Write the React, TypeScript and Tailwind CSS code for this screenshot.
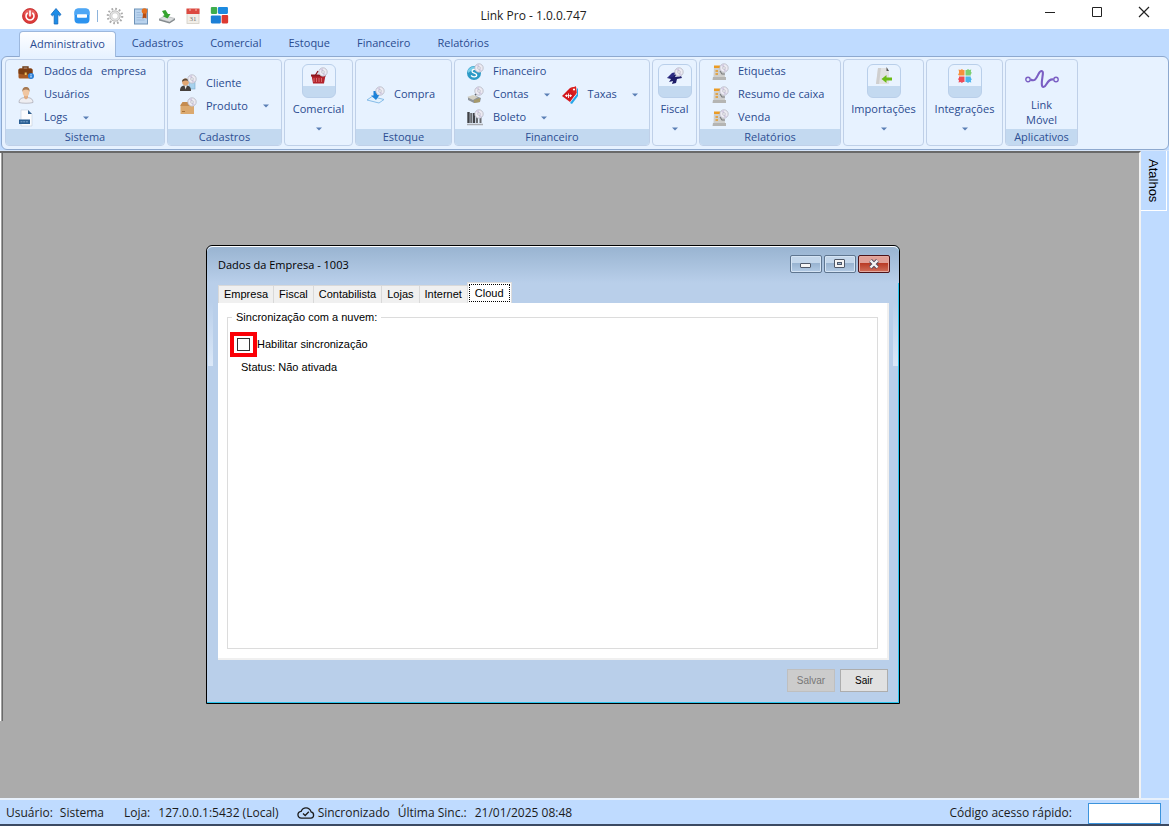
import { useState, type ReactNode } from "react";

// ─── Small drawings ──────────────────────────────────────────────────────────

function Svg({ size = 18, children }: { size?: number; children: ReactNode }) {
  return (
    <svg width={size} height={size} viewBox="0 0 18 18" fill="none" aria-hidden="true" className="shrink-0">
      {children}
    </svg>
  );
}

// Magnifier / disc that sits on the corner of many ribbon icons
function Disc() {
  return (
    <g>
      <circle cx="13" cy="5" r="4.2" fill="#eceaf2" stroke="#b5b7c2" strokeWidth=".8" />
      <path d="M13 5 10 2.4A4 4 0 0 1 13 1ZM13 5l3 2.6A4 4 0 0 1 13 9Z" fill="#d3cde2" />
      <circle cx="13" cy="5" r="1.3" fill="#fff" stroke="#a3a5b3" strokeWidth=".6" />
    </g>
  );
}

const PowerIcon = () => (
  <Svg>
    <circle cx="9" cy="9" r="7.5" fill="#dd3b3b" stroke="#c22929" strokeWidth=".8" />
    <path d="M3 7a6.3 6.3 0 0 1 12 0c-3 2-9 2-12 0Z" fill="#ee7a76" opacity=".6" />
    <path d="M6.2 6.2a4 4 0 1 0 5.6 0M9 4v5" stroke="#fff" strokeWidth="1.6" strokeLinecap="round" />
  </Svg>
);
const UpIcon = () => (
  <Svg>
    <path d="m9 1.500 5 6-1.400 1.300-1.800-1.500V17H7.200V7.300L5.400 8.800 4 7.500Z" fill="#1d8de8" stroke="#1167bb" strokeWidth=".8" />
  </Svg>
);
const MinusIcon = () => (
  <Svg>
    <rect x="1.500" y="1.500" width="15" height="15" rx="4" fill="#2c93ef" />
    <path d="M1.500 8V5.500a4 4 0 0 1 4-4h7a4 4 0 0 1 4 4V8Z" fill="#4ea7f5" />
    <rect x="4" y="7.300" width="10" height="3.400" rx=".8" fill="#fff" />
  </Svg>
);
const GearIcon = () => (
  <Svg>
    <circle cx="9" cy="9" r="7.200" stroke="#aaa" strokeWidth="2.200" strokeDasharray="1.700 2.070" />
    <circle cx="9" cy="9" r="5.200" fill="#e4e4e4" stroke="#bcbcbc" />
    <circle cx="9" cy="9" r="3.200" fill="#fff" stroke="#c4c4c4" strokeWidth=".7" />
  </Svg>
);
const CertificateIcon = () => (
  <Svg>
    <rect x="2.500" y="2" width="13" height="15" fill="#b9d3ee" stroke="#6f93b8" />
    <path d="M4.500 5.500h4M4.500 8h6M4.500 10.500h8M4.500 13h8" stroke="#9dbbdc" />
    <path d="m11 5.500-.5 6 2-.8 2 .8v-6Z" fill="#b84d12" />
    <circle cx="12.500" cy="4" r="2.800" fill="#e5701d" />
  </Svg>
);
const DownloadIcon = () => (
  <Svg>
    <path d="m1 12 6-3 10 2.500-5.500 3.500Z" fill="#dcdedf" stroke="#a2a6a9" strokeWidth=".6" />
    <path d="m1 12 10.500 3v1.600L1 13.500Zm10.500 3L17 11.500v1.400l-5.500 3.700Z" fill="#858b8e" />
    <path d="M4 4 7.500 3 10 7h2.500L9.500 11.500 4.500 9l2-.7Z" fill="#35a32e" />
  </Svg>
);
const CalendarIcon = () => (
  <Svg>
    <rect x="3" y="2.500" width="12" height="14" fill="#f1eee8" stroke="#d3cec5" strokeWidth=".8" />
    <rect x="2.500" y="1.500" width="13" height="5.500" fill="#dc4a41" />
    <path d="M5 3h2M11 3h2" stroke="#f3b5b0" />
    <text x="9" y="14" textAnchor="middle" fontSize="7" fontFamily="Liberation Serif, serif" fill="#77716b">31</text>
  </Svg>
);
const TilesIcon = () => (
  <Svg size={19}>
    <rect x=".8" y="1" width="6" height="6.500" rx="1" fill="#3fae4d" />
    <rect x="7.500" y="1" width="9.500" height="6.500" rx="1" fill="#1c8ae0" />
    <rect x=".8" y="9" width="9.500" height="7.500" rx="1" fill="#1c7fd6" />
    <rect x="11" y="8.500" width="6.200" height="8" rx="1" fill="#dd3a31" />
  </Svg>
);

const BriefcaseIcon = () => (
  <Svg>
    <path d="M6 6V4h5v2" stroke="#6b3a16" strokeWidth="1.400" />
    <rect x="1.500" y="5.500" width="14" height="10" rx="1.500" fill="#a85a24" />
    <path d="M1.500 7q0-1.500 1.500-1.500h11q1.500 0 1.500 1.500v3.500c-4 1.500-10 1.500-14 0Z" fill="#7b3d14" />
    <rect x="7.700" y="9.500" width="2" height="2.500" fill="#f0c05c" />
    <circle cx="14" cy="13" r="3" fill="#2a7fd8" />
    <path d="M14 12.500v2M14 11v.8" stroke="#fff" />
  </Svg>
);
const UserIcon = () => (
  <Svg>
    <path d="M2 16.500c0-4 3-5 7-5s7 1 7 5c-3 1-11 1-14 0Z" fill="#eeeef2" stroke="#a8a8b2" strokeWidth=".7" />
    <path d="M7 9h4v3l-2 1.500L7 12Z" fill="#dfac83" />
    <ellipse cx="9" cy="6" rx="3.300" ry="4.200" fill="#f0c6a1" />
    <path d="M5.500 6C5 2.500 6.500 1 9 1s4 1.500 3.500 5c-.5-2-1.500-2.600-3.500-2.600S6 4 5.500 6Z" fill="#a57953" />
  </Svg>
);
const LogFileIcon = () => (
  <Svg>
    <path d="M4 1h7l4 4v12H4Z" fill="#fbfcfe" stroke="#c4cddb" strokeWidth=".6" />
    <path d="m11 1 4 4h-4Z" fill="#2f5f8f" />
    <path d="M2 10.500h11V15H2Z" fill="#2b5f93" />
    <path d="M3.500 12.800h8" stroke="#7ea6cd" strokeWidth="1" strokeDasharray="2 .7" />
  </Svg>
);
const ClientIcon = () => (
  <Svg>
    <rect x="10" y="7" width="6" height="8" fill="#a7d2ee" stroke="#79a9c9" strokeWidth=".6" />
    <path d="M1 17c0-4 1.500-5.500 5.500-5.500s5.500 1.500 5.500 5.500Z" fill="#45403c" />
    <path d="m5.500 11.500 1 4 1.500-4Z" fill="#eee" />
    <circle cx="6.500" cy="8" r="3.400" fill="#e2a772" />
    <path d="M3 8c-.3-4.500 6.700-5 7 0-1.500-2-5-2-7 0Z" fill="#5c4a3a" />
    <Disc />
  </Svg>
);
const BoxIcon = () => (
  <Svg>
    <path d="M1.500 8H15v9H1.500Z" fill="#dba96f" />
    <path d="m1.500 8 2-3H9l1 2h5v2H1.500Z" fill="#c58c50" />
    <path d="M3 14.500h3" stroke="#a87339" />
    <Disc />
  </Svg>
);
const BasketIcon = () => (
  <Svg>
    <path d="m5 9 3-5M13 9 9 4" stroke="#8f1d24" strokeWidth="1.300" />
    <path d="M1.500 8h14l-1.500 8.500H3Z" fill="#b3222b" />
    <path d="M4 11v4M6.500 11v4M9 11v4M11.500 11v4" stroke="#de7d7d" strokeWidth=".8" />
    <path d="M1 7.500h14.500v2H1Z" fill="#8b161e" />
    <Disc />
  </Svg>
);
const PurchaseIcon = () => (
  <Svg>
    <path d="m0 14 5-3.500 12 3-5 3.500Z" fill="#e2f1fd" stroke="#7db7e5" strokeWidth=".9" />
    <path d="M6.500 5H10v4h2.500L9 14 4 9.500h2.500Z" fill="#1d83d9" />
    <Disc />
  </Svg>
);
const MoneyIcon = () => (
  <Svg>
    <circle cx="8" cy="10" r="7" fill="#2c9ac6" />
    <path d="M2 7c3-4 8-5 11 0-4-1-8 0-11 3Z" fill="#76cde8" />
    <path d="M11 7.500c-2-2-5-1-5 .7 0 2.300 5 1.500 4.800 4C10.500 14.500 7 14.500 5 12.500" stroke="#fff" strokeWidth="1.300" />
    <Disc />
  </Svg>
);
const AccountsIcon = () => (
  <Svg>
    <path d="m2 11 8-1 5 2-1 4-6 1-6-3Z" fill="#90969c" />
    <path d="m1 11 6-2 5 2-5 3Z" fill="#d4d1c4" />
    <path d="m8 14 6-2v4l-6 1Z" fill="#a69a6c" />
    <path d="m9 9 3-2" stroke="#646870" strokeWidth="2" />
    <Disc />
  </Svg>
);
const BarcodeIcon = () => (
  <Svg>
    <path d="M2.500 3v11M8 4v10" stroke="#404247" strokeWidth="2.400" />
    <path d="M5.200 4v10M11 8v6M14.500 8v6" stroke="#6a6c71" strokeWidth="2" />
    <path d="M1 15.500h16" stroke="#aaacb1" strokeWidth="1.300" />
    <Disc />
  </Svg>
);
const TagIcon = () => (
  <Svg>
    <path d="m9 17 7-9V2l1 1v7l-6 8Z" fill="#27a6e9" />
    <path d="M1 10 9 2l6-1.500L15.500 7 9 16Z" fill="#d3161d" />
    <path d="m9 2 6-1.500L15.500 7l-2 3Z" fill="#d9211f" />
    <circle cx="13" cy="3.500" r="1.100" fill="#fff" />
    <path d="M4 9.700h7M5.500 8.500v2.500M7.500 7.500v4.500M9.500 8.500v2.500" stroke="#fff" strokeWidth=".9" />
  </Svg>
);
const FiscalIcon = () => (
  <Svg>
    <path d="m1 11 7-3 3-2-2 4 6-1 1 2-5 1-1 4-4 1 1-3-4 1 2-3Z" fill="#1d1c69" />
    <path d="m1 11 5-5 4-1-3 5Z" fill="#2b2a82" />
    <Disc />
  </Svg>
);
const ReportIcon = () => (
  <Svg>
    <path d="M3 3h10l1 11H2.500Z" fill="#cfcfcd" />
    <path d="M2 14h13v3H1.500Z" fill="#b5b5b3" />
    <path d="M3 2.500h6V5H3Z" fill="#eb9b24" />
    <path d="M4.500 8H7M4.500 11H7" stroke="#e69820" strokeWidth="1.500" />
    <path d="m9 8 2 3h3" stroke="#77797c" strokeWidth="1.100" />
    <Disc />
  </Svg>
);
const ImportIcon = () => (
  <Svg>
    <path d="M3 1h9l2 3.500V17H1Z" fill="#e2e2e2" />
    <path d="M3 1h3L4 17H1Z" fill="#cfcfcf" />
    <path d="m11.500 0 2.500 4h-2.500Z" fill="#555" />
    <path d="m6.500 12 5-4v2.500h5.500v3h-5.500V16Z" fill="#6cbb16" />
  </Svg>
);
const PuzzleIcon = () => (
  <Svg>
    <path d="m3 4.500-.5-2 2 .5L6 2l1 1h1.500v5.500H3L2 7.300l1-1Z" fill="#f7903b" />
    <path d="M9.500 3h1.300L12 2l1.300 1 2-.5-.5 2 1 1.500-1 1v1.500H9.500Z" fill="#7bcf72" />
    <path d="M3 9.500h5.500V15H7l-1 1-1.500-1-2 .5.500-2L2 12l1-1Z" fill="#ef4a57" />
    <path d="M9.500 9.500h5.300V11l1 1.200-1 1.300.5 2-2-.5-1.300 1-1.200-1H9.500Z" fill="#4bb4ec" />
  </Svg>
);
const WaveIcon = () => (
  <svg width="34" height="20" viewBox="0 0 34 20" fill="none" stroke="#7b5fc4" aria-hidden="true">
    <circle cx="3" cy="10.500" r="2.200" strokeWidth="1.400" />
    <circle cx="31" cy="10.500" r="2.200" strokeWidth="1.400" />
    <path d="M5.500 10.500C10 13 11.500 9 13.500 5c2-4 5-4 4.300.500C17.200 10 15.500 18 18.500 18c3.500 0 3.500-9 10-7.500" strokeWidth="2.100" />
  </svg>
);
const CloudCheckIcon = () => (
  <svg width="18" height="12" viewBox="0 0 18 12" fill="none" stroke="#1c1c1c" strokeWidth="1.300" aria-hidden="true">
    <path d="M4.500 11.200h9.300a3.200 3.200 0 0 0 .3-6.300C13.300 2.300 11.500.8 9 .8 6.600.8 5 2 4.200 4.300c-4.300.6-4.500 6.300.3 6.900Z" />
    <path d="m6 6.500 2.200 2 3.600-3.800" />
  </svg>
);

// ─── Ribbon pieces ───────────────────────────────────────────────────────────

function Arrow() {
  return (
    <svg width="6" height="4" viewBox="0 0 6 4" aria-hidden="true" className="shrink-0">
      <path d="M0 .5h6L3 3.500Z" fill="#5a7fb5" />
    </svg>
  );
}

function RibbonGroup({ label, className, children }: { label?: string; className: string; children: ReactNode }) {
  return (
    <section className={`flex flex-col overflow-hidden rounded border border-[#bfd0e8] bg-[#e7f2ff] ${className}`}>
      <div className="flex flex-1 flex-col justify-center">{children}</div>
      {label && <h2 className="h-4 bg-[#c3d9f0] text-center leading-4 text-[#2d4f93]">{label}</h2>}
    </section>
  );
}

function RibbonItem({ icon, label, arrow }: { icon: ReactNode; label: string; arrow?: boolean }) {
  return (
    <button type="button" className="flex h-[23px] items-center whitespace-pre text-left">
      {icon}
      <span className="ml-[9px]">{label}</span>
      {arrow && <span className="ml-[15px]"><Arrow /></span>}
    </button>
  );
}

function RibbonBig({ icon, label }: { icon: ReactNode; label: string }) {
  return (
    <button type="button" className="flex h-full flex-col items-center pt-1">
      <span className="flex h-[34px] w-[34px] justify-center rounded-md border border-[#b9cfea] bg-[linear-gradient(#e9f3ff_67%,#c3d9f0_67%)] pt-[2px]">
        {icon}
      </span>
      <span className="mt-[3px] h-4 leading-4">{label}</span>
      <span className="mt-[10px]"><Arrow /></span>
    </button>
  );
}

const RIBBON_TABS = ["Administrativo", "Cadastros", "Comercial", "Estoque", "Financeiro", "Relatórios"];
const DIALOG_TABS = ["Empresa", "Fiscal", "Contabilista", "Lojas", "Internet", "Cloud"];

const QUICK_TOOLS = [
  { name: "Encerrar", icon: <PowerIcon /> },
  { name: "Subir", icon: <UpIcon /> },
  { name: "Recolher", icon: <MinusIcon /> },
  { name: "Configurar", icon: <GearIcon /> },
  { name: "Certificado", icon: <CertificateIcon /> },
  { name: "Baixar", icon: <DownloadIcon /> },
  { name: "Agenda", icon: <CalendarIcon /> },
  { name: "Painel", icon: <TilesIcon /> },
];

function TitleBar() {
  return (
    <header className="flex h-[29px] items-center bg-white pt-[2px] pr-[2px]">
      <div className="flex w-[41%] items-center gap-2 pl-[21px]">
        {QUICK_TOOLS.map((tool, i) => (
          <div key={tool.name} className="flex items-center gap-2">
            {i === 3 && <span className="-ml-[2px] h-3 w-px bg-[#8db4dc]" />}
            <button type="button" aria-label={tool.name}>{tool.icon}</button>
          </div>
        ))}
      </div>
      <h1 className="flex-1 pl-[2px] text-xs text-[#222]">Link Pro - 1.0.0.747</h1>
      <div className="-mt-2 flex text-[#222]">
        <button type="button" aria-label="Minimizar" className="flex w-[47px] justify-center">
          <svg width="12" height="12" viewBox="0 0 12 12"><path d="M1 6.500h10" stroke="currentColor" /></svg>
        </button>
        <button type="button" aria-label="Maximizar" className="flex w-[47px] justify-center">
          <svg width="12" height="12" viewBox="0 0 12 12" fill="none"><path d="M1.500 1.500h9v9h-9Z" stroke="currentColor" /></svg>
        </button>
        <button type="button" aria-label="Fechar" className="flex w-[47px] justify-center">
          <svg width="12" height="12" viewBox="0 0 12 12"><path d="m1 1 10 10M11 1 1 11" stroke="currentColor" strokeWidth="1.200" /></svg>
        </button>
      </div>
    </header>
  );
}

function Ribbon() {
  const [active, setActive] = useState("Administrativo");

  return (
    <div className="bg-[#bfdbff] text-[11px] text-[#2a4b8f]">
      <nav className="flex h-[27px] items-end gap-[5px] pl-[19px]">
        {RIBBON_TABS.map((tab) => (
          <button
            key={tab}
            type="button"
            onClick={() => setActive(tab)}
            className={`h-[26px] rounded-t ${active === tab ? "relative top-px border border-b-0 border-[#9db8dd] bg-linear-to-b from-white to-[#e7f2ff] px-[10px]" : "px-[11px]"}`}
          >
            {tab}
          </button>
        ))}
      </nav>
      <div className="ml-px flex h-[94px] gap-[2px] rounded-md border border-[#8ea9cf] bg-[#e7f2ff] p-[2px] pb-[3px] pl-[3px]">
        <RibbonGroup label="Sistema" className="w-[160px]">
          <div className="flex flex-col pl-[11px]">
            <RibbonItem icon={<BriefcaseIcon />} label="Dados da   empresa" />
            <RibbonItem icon={<UserIcon />} label="Usuários" />
            <RibbonItem icon={<LogFileIcon />} label="Logs" arrow />
          </div>
        </RibbonGroup>
        <RibbonGroup label="Cadastros" className="w-[115px]">
          <div className="flex flex-col pl-[11px]">
            <RibbonItem icon={<ClientIcon />} label="Cliente" />
            <RibbonItem icon={<BoxIcon />} label="Produto" arrow />
          </div>
        </RibbonGroup>
        <RibbonGroup className="w-[69px]">
          <RibbonBig icon={<BasketIcon />} label="Comercial" />
        </RibbonGroup>
        <RibbonGroup label="Estoque" className="w-[97px]">
          <div className="flex flex-col pl-[11px]">
            <RibbonItem icon={<PurchaseIcon />} label="Compra" />
          </div>
        </RibbonGroup>
        <RibbonGroup label="Financeiro" className="w-[196px]">
          <div className="flex items-center gap-[11px] pl-[11px]">
            <div className="flex flex-col">
              <RibbonItem icon={<MoneyIcon />} label="Financeiro" />
              <RibbonItem icon={<AccountsIcon />} label="Contas" arrow />
              <RibbonItem icon={<BarcodeIcon />} label="Boleto" arrow />
            </div>
            <RibbonItem icon={<TagIcon />} label="Taxas" arrow />
          </div>
        </RibbonGroup>
        <RibbonGroup className="w-[45px]">
          <RibbonBig icon={<FiscalIcon />} label="Fiscal" />
        </RibbonGroup>
        <RibbonGroup label="Relatórios" className="w-[142px]">
          <div className="flex flex-col pl-[11px]">
            <RibbonItem icon={<ReportIcon />} label="Etiquetas" />
            <RibbonItem icon={<ReportIcon />} label="Resumo de caixa" />
            <RibbonItem icon={<ReportIcon />} label="Venda" />
          </div>
        </RibbonGroup>
        <RibbonGroup className="w-[81px]">
          <RibbonBig icon={<ImportIcon />} label="Importações" />
        </RibbonGroup>
        <RibbonGroup className="w-[77px]">
          <RibbonBig icon={<PuzzleIcon />} label="Integrações" />
        </RibbonGroup>
        <RibbonGroup label="Aplicativos" className="w-[73px]">
          <button type="button" className="flex flex-col items-center pt-[6px] leading-[15px]">
            <WaveIcon />
            <span className="mt-2">Link</span>
            <span>Móvel</span>
          </button>
        </RibbonGroup>
      </div>
      <div className="h-px bg-[#d7e6fa]" />
    </div>
  );
}

// ─── Company window ──────────────────────────────────────────────────────────

function CompanyWindow() {
  const [tab, setTab] = useState("Cloud");
  const [enabled, setEnabled] = useState(false);

  return (
    <section
      role="dialog"
      aria-labelledby="company-title"
      className="absolute top-[92px] left-[203px] flex h-[459px] w-[694px] flex-col rounded-t-md border border-black bg-[#b9cfea] font-['Liberation_Sans',Arial,sans-serif] text-[11px] text-black shadow-[inset_-1px_-1px_0_#29c5ee]"
    >
      <header className="flex h-[37px] items-center rounded-t-md border-t border-white bg-linear-to-b from-[#99b4d1] to-[#b9cfea] pr-[9px] pl-[11px]">
        <h2 id="company-title" className="flex-1 font-['Open_Sans','Noto_Sans',sans-serif]">Dados da Empresa - 1003</h2>
        <div className="-mt-[2px] flex gap-[2px]">
          <button type="button" aria-label="Minimizar janela" className="flex h-[18px] w-8 items-center justify-center rounded-xs border border-[#5f7690] bg-[linear-gradient(#c4d7eb_45%,#98b3d0_45%,#b3cbe5)] shadow-[inset_0_0_0_1px_#d5e4f4]">
            <svg width="12" height="12" viewBox="0 0 12 12"><rect x=".5" y="5.500" width="10" height="4" rx=".5" fill="#f5f5f5" stroke="#4f5868" /></svg>
          </button>
          <button type="button" aria-label="Maximizar janela" className="flex h-[18px] w-8 items-center justify-center rounded-xs border border-[#5f7690] bg-[linear-gradient(#c4d7eb_45%,#98b3d0_45%,#b3cbe5)] shadow-[inset_0_0_0_1px_#d5e4f4]">
            <svg width="12" height="12" viewBox="0 0 12 12"><rect x=".5" y="1.500" width="10" height="8" rx=".5" fill="#f5f5f5" stroke="#4f5868" /><rect x="3.500" y="4.500" width="4" height="2" fill="#9fb9d6" stroke="#4f5868" /></svg>
          </button>
          <button type="button" aria-label="Fechar janela" className="flex h-[18px] w-8 items-center justify-center rounded-xs border border-[#4d1319] bg-[linear-gradient(#e1a097_45%,#b93a24_45%,#d0705c)] shadow-[inset_0_0_0_1px_#e5aaa0]">
            <svg width="12" height="10" viewBox="0 0 12 10"><path d="m2.500 1.500 7 7M9.500 1.500l-7 7" stroke="#4f4b5d" strokeWidth="4" /><path d="m2.500 1.500 7 7M9.500 1.500l-7 7" stroke="#f5f5f5" strokeWidth="2.400" /></svg>
          </button>
        </div>
      </header>

      <div className="flex flex-1 flex-col pr-[10px] pl-[11px]">
        <div role="tablist" className="flex h-[20px] items-end">
          {DIALOG_TABS.map((name) =>
            name === tab ? (
              <button
                key={name}
                type="button"
                role="tab"
                aria-selected="true"
                className="relative -ml-px h-[21px] border border-b-0 border-[#dcdcdc] bg-white p-px"
              >
                <span className="flex h-[18px] items-center border border-dotted border-black px-[5px]">{name}</span>
              </button>
            ) : (
              <button
                key={name}
                type="button"
                role="tab"
                aria-selected="false"
                onClick={() => setTab(name)}
                className="h-[18px] border border-b-0 border-l-0 border-[#d9d9d9] bg-[#f0f0f0] px-[5px] first:border-l"
              >
                {name}
              </button>
            ),
          )}
        </div>
        <div role="tabpanel" className="flex h-[357px] flex-col border-r-2 border-b-2 border-[#f0f0f0] bg-white">
          <fieldset className="mx-[9px] mt-[7px] mb-[9px] flex-1 border border-[#dcdcdc] px-[4px]">
            <legend className="px-1 leading-[14px]">Sincronização com a nuvem:</legend>
            <label className="-ml-[2px] flex items-center pt-2">
              <span className="flex h-[25px] w-[27px] items-center justify-center border-4 border-[#fb0007]">
                <input
                  type="checkbox"
                  checked={enabled}
                  onChange={(e) => setEnabled(e.target.checked)}
                  className="h-[13px] w-[13px] appearance-none border border-[#333] bg-white checked:bg-[#333]"
                />
              </span>
              <span>Habilitar sincronização</span>
            </label>
            <p className="mt-[2px] ml-[9px] leading-4">Status: Não ativada</p>
          </fieldset>
        </div>
        <div className="mt-[9px] flex justify-end gap-[5px] pr-px text-[10px]">
          <button type="button" disabled className="h-[23px] w-12 border border-[#bfbfbf] bg-[#cccccc] text-[#777]">Salvar</button>
          <button type="button" className="h-[23px] w-12 border border-[#adadad] bg-[#e1e1e1]">Sair</button>
        </div>
      </div>

      {/* glass highlights on both side frames */}
      <span className="absolute top-[56px] left-px h-16 w-[5px] bg-linear-to-b from-transparent to-[#dbe8f8]" />
      <span className="absolute top-[56px] right-px h-16 w-[5px] bg-linear-to-b from-transparent to-[#dbe8f8]" />
    </section>
  );
}

// ─── App ─────────────────────────────────────────────────────────────────────

export default function App() {
  const [code, setCode] = useState("");

  return (
    <div className="flex min-h-screen flex-col bg-[#bfdbff] font-['Open_Sans','Noto_Sans',sans-serif]">
      <TitleBar />
      <Ribbon />

      <div className="flex flex-1">
        <main className="relative flex-1 border-t-2 border-r-2 border-t-[#696969] border-r-[#f2f2f2] bg-[#ababab]">
          <div className="h-[88%] w-[3px] border-r border-l border-r-[#696969] border-l-white bg-[#a0a0a0]" />
          <div className="absolute top-0 left-[3px]">
            <CompanyWindow />
          </div>
        </main>
        <aside className="w-7">
          <button type="button" className="flex h-[60px] w-[26px] items-center justify-center border-r border-b border-white font-['Liberation_Sans',Arial,sans-serif] text-[13px] text-black [writing-mode:vertical-rl]">
            Atalhos
          </button>
        </aside>
      </div>

      <footer className="flex h-7 items-center border-t-2 border-b-2 border-t-[#e8f1fc] border-b-[#3b4a63] bg-[#bfdbff] pt-[2px] pr-2 pl-[6px] text-xs whitespace-nowrap text-[#1c1c1c]">
        <span className="mr-[7px]">Usuário:</span>
        <span className="mr-5">Sistema</span>
        <span className="mr-2">Loja:</span>
        <span className="mr-[18px]">127.0.0.1:5432 (Local)</span>
        <CloudCheckIcon />
        <span className="mr-2 ml-[3px]">Sincronizado</span>
        <span className="mr-2">Última Sinc.:</span>
        <span>21/01/2025 08:48</span>
        <label htmlFor="quick-code" className="mr-4 ml-auto">Código acesso rápido:</label>
        <input
          id="quick-code"
          value={code}
          onChange={(e) => setCode(e.target.value)}
          className="h-[21px] w-[73px] border border-[#3b93dc] bg-white px-1 outline-none"
        />
      </footer>
    </div>
  );
}
